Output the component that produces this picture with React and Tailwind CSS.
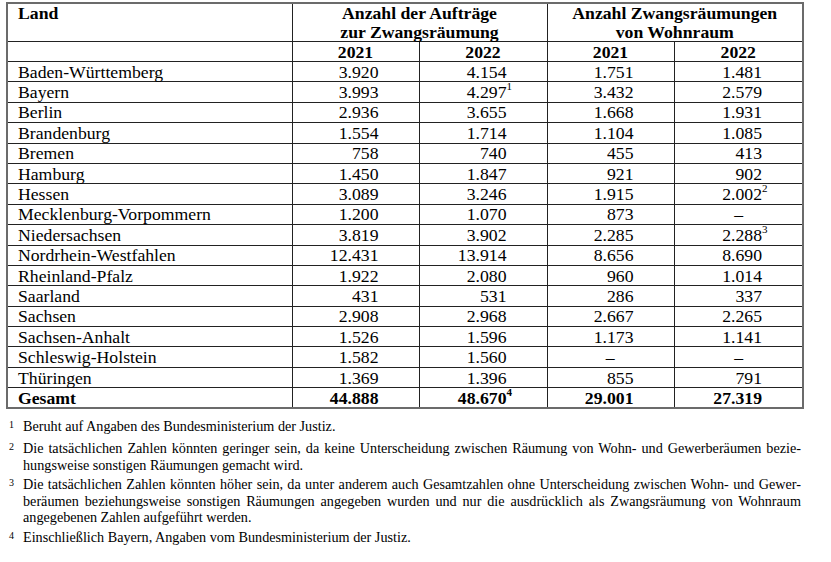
const ROWS = [
  ["Baden-Württemberg", "3.920", "4.154", "1.751", "1.481"],
  ["Bayern", "3.993", ["4.297", "1"], "3.432", "2.579"],
  ["Berlin", "2.936", "3.655", "1.668", "1.931"],
  ["Brandenburg", "1.554", "1.714", "1.104", "1.085"],
  ["Bremen", "758", "740", "455", "413"],
  ["Hamburg", "1.450", "1.847", "921", "902"],
  ["Hessen", "3.089", "3.246", "1.915", ["2.002", "2"]],
  ["Mecklenburg-Vorpommern", "1.200", "1.070", "873", "–"],
  ["Niedersachsen", "3.819", "3.902", "2.285", ["2.288", "3"]],
  ["Nordrhein-Westfahlen", "12.431", "13.914", "8.656", "8.690"],
  ["Rheinland-Pfalz", "1.922", "2.080", "960", "1.014"],
  ["Saarland", "431", "531", "286", "337"],
  ["Sachsen", "2.908", "2.968", "2.667", "2.265"],
  ["Sachsen-Anhalt", "1.526", "1.596", "1.173", "1.141"],
  ["Schleswig-Holstein", "1.582", "1.560", "–", "–"],
  ["Thüringen", "1.369", "1.396", "855", "791"],
];

const TOTAL = ["Gesamt", "44.888", ["48.670", "4"], "29.001", "27.319"];

function Num({ v }) {
  if (Array.isArray(v)) {
    return (
      <span className="relative">
        {v[0]}
        <sup className="absolute left-full top-[-1px] text-[11px] leading-none">
          {v[1]}
        </sup>
      </span>
    );
  }
  return v;
}

function Row({ r, bold }) {
  return (
    <tr className={bold ? "font-bold" : ""}>
      <td className="h-[20.4px] border border-[#222] pl-[10px] leading-[18px] align-middle">
        {r[0]}
      </td>
      {r.slice(1).map((v, i) => (
        <td
          key={i}
          className={
            "border border-[#222] text-right leading-[18px] align-middle " +
            (v === "–" ? "pr-[59px]" : "pr-[40px]")
          }
        >
          <Num v={v} />
        </td>
      ))}
    </tr>
  );
}

function Note({ n, lines, className = "" }) {
  return (
    <div className={"flex " + className}>
      <span className="w-[15px] shrink-0 pl-[1px] text-[10px] leading-[13px]">{n}</span>
      <div className="flex-1">
        {lines.map((l, i) => (
          <div
            key={i}
            className={
              "h-[16.7px] leading-[16.7px] " +
              (i < lines.length - 1 ? "text-justify [text-align-last:justify]" : "")
            }
          >
            {l}
          </div>
        ))}
      </div>
    </div>
  );
}

export default function App() {
  return (
    <div
      className="w-[831px] h-[562px] bg-white text-black pl-[6px] pt-[2px]"
      style={{ fontFamily: '"Liberation Serif", "Times New Roman", serif' }}
    >
      <table className="table-fixed border-collapse border-2 border-[#6b6b6b] w-[796px] text-[17.7px]">
        <colgroup>
          <col className="w-[285px]" />
          <col className="w-[127px]" />
          <col className="w-[128px]" />
          <col className="w-[127px]" />
          <col className="w-[129px]" />
        </colgroup>
        <thead>
          <tr className="font-bold">
            <td className="h-[37px] border border-[#222] pl-[10px] align-top leading-[18.5px]">
              Land
            </td>
            <td
              colSpan={2}
              className="border border-[#222] text-center align-top leading-[18.5px]"
            >
              Anzahl der Aufträge
              <br />
              zur Zwangsräumung
            </td>
            <td
              colSpan={2}
              className="border border-[#222] text-center align-top leading-[18.5px]"
            >
              Anzahl Zwangsräumungen
              <br />
              von Wohnraum
            </td>
          </tr>
          <tr className="font-bold">
            <td className="h-[20px] border border-[#222]"></td>
            <td className="border border-[#222] text-center leading-[18px]">2021</td>
            <td className="border border-[#222] text-center leading-[18px]">2022</td>
            <td className="border border-[#222] text-center leading-[18px]">2021</td>
            <td className="border border-[#222] text-center leading-[18px]">2022</td>
          </tr>
        </thead>
        <tbody>
          {ROWS.map((r) => (
            <Row key={r[0]} r={r} />
          ))}
          <Row r={TOTAL} bold />
        </tbody>
      </table>

      <div className="mt-[9px] w-[795px] pl-[2px] text-[14.2px] flex flex-col">
        <Note n="1" className="mb-[5px]" lines={["Beruht auf Angaben des Bundesministerium der Justiz."]} />
        <Note
          n="2"
          className="mb-[2.7px]"
          lines={[
            "Die tatsächlichen Zahlen könnten geringer sein, da keine Unterscheidung zwischen Räumung von Wohn- und Gewerberäumen bezie-",
            "hungsweise sonstigen Räumungen gemacht wird.",
          ]}
        />
        <Note
          n="3"
          className="mb-[2.7px]"
          lines={[
            "Die tatsächlichen Zahlen könnten höher sein, da unter anderem auch Gesamtzahlen ohne Unterscheidung zwischen Wohn- und Gewer-",
            "beräumen beziehungsweise sonstigen Räumungen angegeben wurden und nur die ausdrücklich als Zwangsräumung von Wohnraum",
            "angegebenen Zahlen aufgeführt werden.",
          ]}
        />
        <Note n="4" lines={["Einschließlich Bayern, Angaben vom Bundesministerium der Justiz."]} />
      </div>
    </div>
  );
}
